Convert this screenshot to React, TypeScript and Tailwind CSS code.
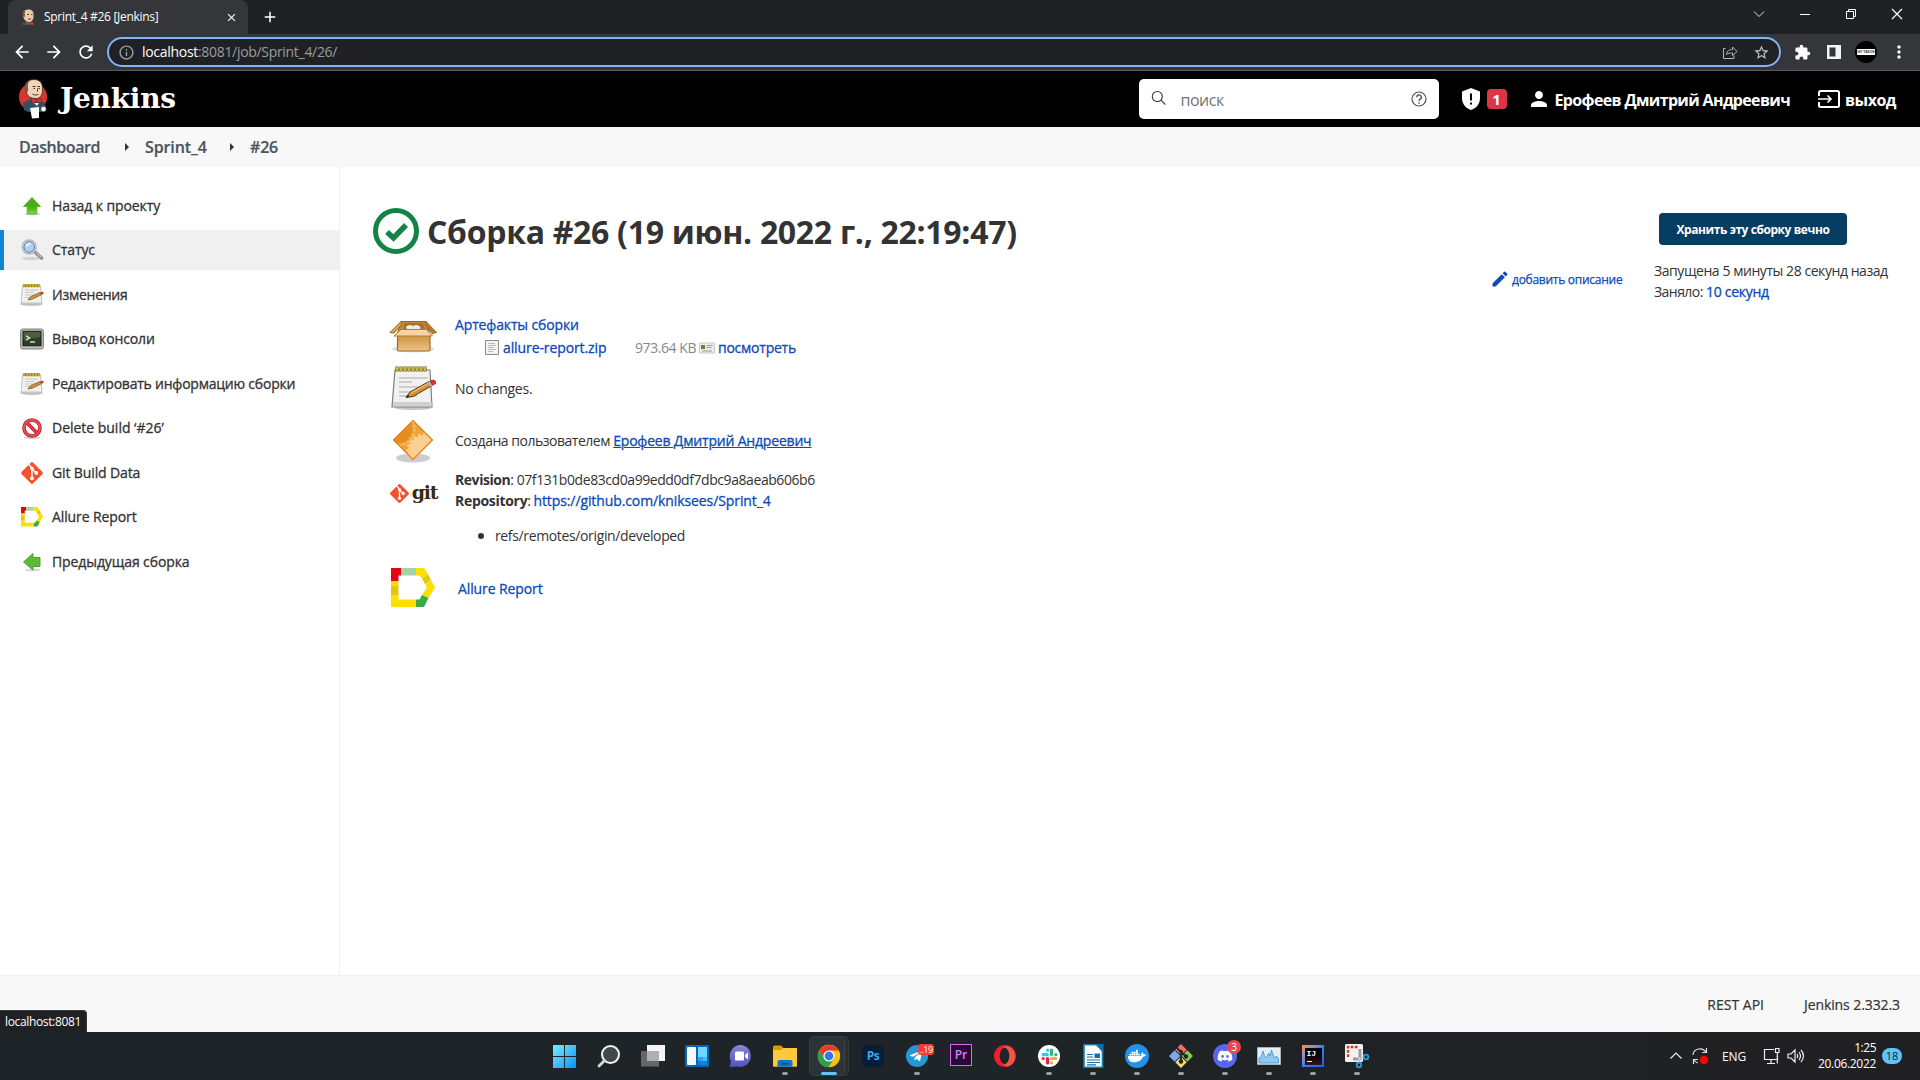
import React, { type ReactNode } from "react";
import {
  MdArrowBack, MdArrowForward, MdRefresh, MdInfoOutline, MdClose, MdAdd, MdStarBorder,
  MdExtension, MdMoreVert, MdPerson, MdEdit,
} from "react-icons/md";
import { FaDocker, FaDiscord, FaTelegramPlane } from "react-icons/fa";

/* ---------- Jenkins artwork ---------- */

function Butler({ className, disc = true }: { className?: string; disc?: boolean }) {
  return (
    <svg viewBox="0 0 28 40" className={className}>
      {disc && <ellipse cx="14" cy="18" rx="14" ry="14" fill="#d33833" />}
      <path d="M4 24 L11 20 L20 21 L26 24 L27 30 L22 33 H9 L5 31 Z" fill="#335061" />
      <path d="M7 12 C5 3 10 .5 15.500 .5 C21.500 .8 24 5 23.500 11 C23.500 16.500 20.500 19.500 17 19.500 C11.500 19.500 8 17 7 12Z" fill="#f0d6b7" stroke="#3b2a22" strokeWidth=".8" />
      <path d="M6.500 12 C4.500 7 6.500 2.500 11 1.200 C8.500 4 8.500 7 9.200 9.500 L8.500 13.500Z" fill="#6b5a55" />
      <path d="M13.500 7.500h3M18.500 7.500h2.500M14.500 9.500h1.500M19.500 9.500h1.500M18.500 9.500v3M13.500 15c2 1.400 4.500 1.400 6 .2" stroke="#4a3329" strokeWidth="1" fill="none" />
      <path d="M12 19 L17 21.500 L22 19 L22.500 24 L17 22.500 L13 24.500Z" fill="#d33833" stroke="#7a1512" strokeWidth=".5" />
      <path d="M15 24l3 3 2-3z" fill="#dfe8ee" />
      <path d="M11 29 L20 28 L20 39 L13 39.500Z" fill="#fff" />
      <circle cx="24.500" cy="30" r="2.600" fill="#fff" stroke="#555" strokeWidth=".6" />
    </svg>
  );
}

function ButlerFavicon() {
  return (
    <svg viewBox="0 0 14 16" className="h-4 w-[14px]">
      <path d="M.5 16 Q.5 13 4 12.500 H10 Q13.500 13 13.500 16Z" fill="#335061" />
      <path d="M2 6 C1.500 1.500 4.500 .5 7.500 .5 C11.500 .5 13 3 12.500 7 C12.500 11 10.500 13 8 13 C4.500 13 2.500 10 2 6Z" fill="#e8cda9" />
      <path d="M2 7 C1 3 2.500 1 5 .8 C3.500 2.500 3.500 4 4 6 L3.500 8.500Z" fill="#6b5a55" />
      <path d="M6 5.500h2M10 5.500h1.500M7 10h3" stroke="#4a3329" strokeWidth=".9" />
      <path d="M5 13 L8.500 14 L12 13 V16 L8.500 15 L5.500 16Z" fill="#d33833" />
    </svg>
  );
}

function ArrowGreen({ left }: { left?: boolean }) {
  return (
    <svg viewBox="0 0 24 24" className="size-6">
      <defs>
        <linearGradient id="greenArrow" x1="0" y1="0" x2="0" y2="1">
          <stop offset="0" stopColor="#5ca62c" />
          <stop offset=".55" stopColor="#45ac12" />
          <stop offset="1" stopColor="#7be03a" />
        </linearGradient>
      </defs>
      <ellipse cx="12.500" cy="20" rx="8" ry="1.500" fill="#000" opacity=".15" />
      {left
        ? <path d="M3.500 12 L13 3.500 V7.500 H20 V16.500 H13 V20 Z" fill="#5dbb35" stroke="#4b9a26" strokeWidth=".9" />
        : <path d="M12 3.500 L20.500 12.500 H16.800 V20 H7.200 V12.500 H3.500 Z" fill="url(#greenArrow)" stroke="#5aa92c" strokeWidth=".9" />}
    </svg>
  );
}

function Magnifier() {
  return (
    <svg viewBox="0 0 24 24" className="size-6">
      <ellipse cx="11" cy="20.500" rx="9" ry="1.800" fill="#000" opacity=".12" />
      <path d="M15.500 14.500 L21.500 20" stroke="#8c8c8c" strokeWidth="3.600" strokeLinecap="round" />
      <path d="M16.500 15 L21 19" stroke="#bdbdbd" strokeWidth="1.400" strokeLinecap="round" />
      <circle cx="9.200" cy="9" r="7" fill="#e8e8e8" stroke="#b5b5b5" strokeWidth="1.300" />
      <circle cx="9.200" cy="9" r="5.300" fill="#b4d0f0" stroke="#4a79b8" strokeWidth="1" />
      <path d="M5.500 8.500 a4 4 0 0 1 6 -3.200 a7 5 0 0 1 -6 3.200z" fill="#e6f0fb" />
    </svg>
  );
}

function Notepad() {
  return (
    <svg viewBox="0 0 48 48" className="size-12">
      <ellipse cx="24" cy="44" rx="18" ry="2" fill="#000" opacity=".22" />
      <path d="M6 6 H41 L43 43 H3 Z" fill="#f1f1ef" stroke="#7d7f7a" strokeWidth="1.200" />
      <path d="M4.500 38 H42.500 L43 42 H4Z" fill="#cfcfcd" />
      <path d="M10 14h29M10 18h13M10 23h24M10 28h22M10 32h18" stroke="#a9a9a9" strokeWidth="1" />
      <path d="M8 2.500v5M12 2.500v5M16 2.500v5M20 2.500v5M24 2.500v5M28 2.500v5M32 2.500v5M36 2.500v5" stroke="#6b5a08" strokeWidth="3.200" />
      <path d="M8 3v4M12 3v4M16 3v4M20 3v4M24 3v4M28 3v4M32 3v4M36 3v4" stroke="#e3c93a" strokeWidth="1.700" />
      <path d="M17 33.500 L21 28 L40 17.500 L43 21.500 L24 32.500 Z" fill="#d3913c" stroke="#573a10" strokeWidth="1" />
      <path d="M22 29 L40 19" stroke="#f0c07c" strokeWidth="1.200" />
      <path d="M38.500 18.300 L41 17 L43.500 21.200 L41 22.700Z" fill="#b5b5b5" />
      <path d="M41 17 Q45 15 46.500 17.500 T43.500 21.300Z" fill="#e03030" stroke="#8b1b1b" strokeWidth=".6" />
      <path d="M17 33.500 L19 30.500 L20.500 32.800Z" fill="#222" />
    </svg>
  );
}

function NotepadSmall() {
  return (
    <svg viewBox="0 0 24 24" className="size-6">
      <ellipse cx="12" cy="22" rx="9" ry="1.200" fill="#000" opacity=".2" />
      <path d="M2.500 2.500 H20.500 L22 21.500 H1 Z" fill="#f1f1ef" stroke="#b9bab6" strokeWidth=".9" />
      <path d="M1.200 19.500 H21.800 L22 21.500 H1Z" fill="#c4c4c1" />
      <path d="M5 7h13M5 9.500h9M5 12h10M5 14.500h7" stroke="#c4c4c2" strokeWidth=".9" />
      <path d="M3 1h17v3.300H3z" fill="#c3a93a" />
      <path d="M5.500 1.500v2.500M8.500 1.500v2.500M11.500 1.500v2.500M14.500 1.500v2.500M17.500 1.500v2.500" stroke="#8d7a22" strokeWidth=".8" />
      <path d="M8 17 L10.500 13.700 L20 9.500 L21.500 11.700 L12 16.300 Z" fill="#d3913c" stroke="#7b5a28" strokeWidth=".8" />
      <path d="M20 9.500 Q22.500 8.200 23.500 9.600 T21.500 11.700Z" fill="#e03030" />
    </svg>
  );
}

function Terminal() {
  return (
    <svg viewBox="0 0 24 24" className="size-6">
      <rect x=".6" y="2" width="22.800" height="20" rx="2.200" fill="#bcbeb9" stroke="#7f817d" />
      <rect x="3" y="4.300" width="18" height="14.400" fill="#2c3f24" stroke="#15190f" />
      <path d="M3.500 4.800 H20.500 V10 L3.500 13Z" fill="#55694a" opacity=".75" />
      <path d="M6 8.800 L9.500 11 L6 13.200" fill="none" stroke="#eef3ea" strokeWidth="1.300" />
      <path d="M10 15h5" stroke="#eef3ea" strokeWidth="1.300" />
      <path d="M16 20.400h2" stroke="#75d025" strokeWidth="1" />
    </svg>
  );
}

function Forbidden() {
  return (
    <svg viewBox="0 0 24 24" className="size-6">
      <ellipse cx="12" cy="21.600" rx="8.500" ry="1.300" fill="#000" opacity=".18" />
      <circle cx="12" cy="12" r="8" fill="#fff" stroke="#c01a20" strokeWidth="3.600" />
      <path d="M6.500 6.500 L17.500 17.500" stroke="#c01a20" strokeWidth="3.600" />
      <circle cx="12" cy="12" r="8" fill="none" stroke="#e0555a" strokeWidth="2" />
      <path d="M6.500 6.500 L17.500 17.500" stroke="#dd3f44" strokeWidth="2" />
    </svg>
  );
}

function GitMark({ className }: { className?: string }) {
  return (
    <svg viewBox="0 0 24 24" className={className}>
      <rect x="3.900" y="3.900" width="16.200" height="16.200" rx="1.600" transform="rotate(45 12 12)" fill="#f4512c" />
      <path d="M8.800 3.500 L12 7 V17.500 M12 8 L16.300 12" stroke="#fff" strokeWidth="1.500" fill="none" />
      <circle cx="12" cy="7.500" r="1.800" fill="#fff" />
      <circle cx="12" cy="17.300" r="1.900" fill="#fff" />
      <circle cx="16.300" cy="12" r="1.900" fill="#fff" />
    </svg>
  );
}

function Allure({ className }: { className?: string }) {
  return (
    <svg viewBox="0 0 44 40" className={className}>
      <path d="M0 0 H10 V7.500 H7.500 V13 H0Z" fill="#e30613" />
      <path d="M10 0 H25 V7.500 H10Z" fill="#a6d1a4" />
      <path d="M25 0 H33 L37.500 7 L31 10.500 L28.500 7.500 H25Z" fill="#ffde00" />
      <path d="M37.300 6.700 L31 10.500 L34 16 L40 12Z" fill="#e0c80f" />
      <path d="M34 16 L40 12 L44 19.500 L37.500 30 L31 27 L36 19.500Z" fill="#ffde00" />
      <path d="M37.500 30 L31 27 L28.500 31.500 H25 V39 H33Z" fill="#3aaa42" />
      <path d="M0 31.500 H25 V39 H0Z" fill="#ffde00" />
      <path d="M0 13 H7.500 V18 H0Z M0 27 H7.500 V32 H0Z" fill="#ffde00" />
      <path d="M0 18 H7.500 V27 H0Z" fill="#e0c80f" />
    </svg>
  );
}

function Box() {
  return (
    <svg viewBox="0 0 48 48" className="size-12">
      <defs>
        <linearGradient id="boxFront" x1="0" y1="0" x2="0" y2="1">
          <stop offset="0" stopColor="#c98f3a" />
          <stop offset="1" stopColor="#edc486" />
        </linearGradient>
      </defs>
      <ellipse cx="24" cy="37" rx="21" ry="3.500" fill="#000" opacity=".13" />
      <path d="M12 9.500 H37 L41 23 H8Z" fill="#c28a3c" stroke="#9a6419" strokeWidth="1" />
      <path d="M15.500 11 H34 L36 18 H14Z" fill="#a5732f" />
      <path d="M17 15 Q20 11.500 24 14 Q28 11.500 31.500 15 L31 17.500 H18Z" fill="#ececec" />
      <path d="M12 9.500 L1 20.500 L5 21 L13 12Z" fill="#dfa658" stroke="#9a6419" strokeWidth="1" />
      <path d="M37 9.500 L47.500 20.500 L43 21.500 L36 12Z" fill="#b87c2a" stroke="#9a6419" strokeWidth="1" />
      <rect x="8.500" y="22" width="32.500" height="17" rx="1.500" fill="url(#boxFront)" stroke="#a56a1c" strokeWidth="1.200" />
      <path d="M12 17.500 H37.500 L43.500 24 H5Z" fill="#f5d5a4" stroke="#b87c2a" strokeWidth="1" />
    </svg>
  );
}

function UserCause() {
  return (
    <svg viewBox="0 0 48 48" className="size-12">
      <defs>
        <linearGradient id="causeFill" x1="0" y1="0" x2="1" y2="1">
          <stop offset="0" stopColor="#ef9a2c" />
          <stop offset="1" stopColor="#f4a83f" />
        </linearGradient>
        <clipPath id="causeClip"><path d="M24 4 L44 24 L24 44 L4 24Z" /></clipPath>
      </defs>
      <ellipse cx="24" cy="42" rx="17" ry="4.500" fill="#000" opacity=".2" />
      <path d="M24 4 L44 24 L24 44 L4 24Z" fill="url(#causeFill)" />
      <g clipPath="url(#causeClip)">
        <circle cx="9" cy="13" r="16.500" fill="none" stroke="#f9c377" strokeWidth="2" strokeDasharray="2.500 2" />
        <circle cx="9" cy="13" r="14" fill="#e28f1f" />
        <circle cx="36" cy="36" r="17" fill="#fbd092" />
        <circle cx="36" cy="36" r="17.500" fill="none" stroke="#fbd092" strokeWidth="3" strokeDasharray="2.500 2.500" />
      </g>
      <path d="M24 4.600 L43.400 24 L24 43.400 L4.600 24Z" fill="none" stroke="#ee7f1c" strokeWidth="1.200" />
    </svg>
  );
}

/* ---------- browser chrome ---------- */

function TabStrip() {
  return (
    <div className="flex h-[34px] bg-[#202124] pl-2 text-white">
      <div className="flex h-full w-60 items-center rounded-t-lg bg-[#35363a] pl-[13px] pr-2.5">
        <ButlerFavicon />
        <span className="mb-px ml-[9px] grow whitespace-pre text-[12px] tracking-[-0.3px]">Sprint_4 #26 [Jenkins]</span>
        <MdClose className="size-[13px]" />
      </div>
      <MdAdd className="ml-[13px] mt-2 size-[18px]" />
      <div className="ml-auto flex h-[28px] items-center">
        <svg viewBox="0 0 12 12" className="mr-[34px] size-3 fill-none stroke-[#e0e0e0]"><path d="M1 3.500 L6 8.500 L11 3.500" /></svg>
        <svg viewBox="0 0 12 12" className="mr-[34px] size-3 fill-none stroke-white"><path d="M1 6.500H11" /></svg>
        <svg viewBox="0 0 12 12" className="mr-[34px] size-3 fill-none stroke-white"><path d="M1.500 3.500h7v7h-7z M3.500 3V1.500h7v7H9" /></svg>
        <svg viewBox="0 0 12 12" className="mr-[17px] size-3 fill-none stroke-white"><path d="M1 1 L11 11 M11 1 L1 11" strokeWidth="1.200" /></svg>
      </div>
    </div>
  );
}

function Toolbar() {
  return (
    <div className="flex h-[37px] items-center border-b border-[#5b5c60] bg-[#35363a] pl-3 text-white">
      <MdArrowBack className="size-5" />
      <MdArrowForward className="ml-3 size-5" />
      <MdRefresh className="ml-3 size-5" />
      <div className="ml-[11px] flex h-[30px] w-[1674px] items-center rounded-full border-2 border-[#84b2f6] bg-[#202124] px-[9px]">
        <MdInfoOutline className="size-[17px] text-[#9aa0a6]" />
        <span className="mb-px ml-[7px] whitespace-pre text-[14px] tracking-[-0.3px]">localhost</span>
        <span className="mb-px grow whitespace-pre text-[14px] tracking-[-0.31px] text-[#9a9da1]">:8081/job/Sprint_4/26/</span>
        <svg viewBox="0 0 16 16" className="size-4 fill-none stroke-[#b4b6b9]">
          <path d="M3.500 4.500H1.500v10h10.500v-3" />
          <path d="M4.500 10.500c.5-4 3-5 6-5V3l4.500 4.500-4.500 4V9c-3 0-4.500.2-6 1.500z" />
        </svg>
        <MdStarBorder className="ml-[15px] size-[17px] text-[#c2c4c7]" />
      </div>
      <MdExtension className="ml-[13px] size-[17px]" />
      <svg viewBox="0 0 14 14" className="ml-4 size-3.5"><path d="M0 0h14v14H0z" fill="#f1f3f4" /><path d="M2.500 2.500h6v9h-6z" fill="#35363a" /></svg>
      <div className="ml-3.5 flex size-[22px] items-center justify-center rounded-full bg-black">
        <span className="flex h-1.5 w-[18px] items-center justify-center whitespace-nowrap bg-white text-[3.500px] font-bold leading-none text-[#333]">НУ ТАКОЕ</span>
      </div>
      <MdMoreVert className="ml-3 size-5" />
    </div>
  );
}

/* ---------- Jenkins page ---------- */

function Header() {
  return (
    <header className="flex h-14 items-center bg-black text-[16px] font-bold text-white">
      <Butler className="ml-[19px] h-10 w-7" />
      <span className="mb-px ml-[13px] font-['DejaVu_Serif',serif] text-[28px] leading-8 tracking-[-0.25px]">Jenkins</span>
      <div className="ml-auto flex h-10 w-[300px] items-center rounded-[5px] bg-white px-3 font-normal">
        <svg viewBox="0 0 16 16" className="mt-[-2px] size-4 fill-none stroke-[#333a40]" strokeWidth="1.100"><circle cx="6.300" cy="6.500" r="5" /><path d="M10 10.200 L14.300 14.500" /></svg>
        <span className="ml-[14px] mt-px grow text-[16px] tracking-[-0.5px] text-[#757575]">поиск</span>
        <svg viewBox="0 0 16 16" className="size-4 fill-none stroke-[#4d545d]" strokeWidth="1.200"><circle cx="8" cy="8" r="7" /><path d="M5.700 6.300a2.300 2.300 0 1 1 3.300 2c-.8.400-1 .8-1 1.700M8 11.300v1.400" strokeWidth="1.400" /></svg>
      </div>
      <svg viewBox="0 0 18 22" className="ml-[23px] h-[22px] w-[18px]"><path d="M9 0 L18 3.500 V10 C18 16 14 20.500 9 22 C4 20.500 0 16 0 10 V3.500Z" fill="#fff" /><path d="M9 5.500v7M9 14.500v2" stroke="#000" strokeWidth="2" /></svg>
      <span className="ml-[7px] flex h-5 w-5 items-center justify-center rounded-[4px] bg-[#dc3545] text-[15px]">1</span>
      <MdPerson className="ml-5 size-6" />
      <span className="ml-1 whitespace-pre pt-px tracking-[-0.66px]">Ерофеев Дмитрий Андреевич</span>
      <svg viewBox="0 0 22 18" className="ml-7 h-[18px] w-[22px] fill-none stroke-white" strokeWidth="2"><path d="M1 6V2.500Q1 1 2.500 1H19.500Q21 1 21 2.500V15.500Q21 17 19.500 17H2.500Q1 17 1 15.500V12" /><path d="M0 9h12M9.500 5.500L13 9l-3.500 3.500" strokeWidth="1.600" /></svg>
      <span className="ml-[5px] mr-6 pt-px tracking-[-0.49px]">выход</span>
    </header>
  );
}

function Caret() {
  return <span className="mb-px size-0 border-y-4 border-l-4 border-y-transparent border-l-[#333]" />;
}

function Breadcrumbs() {
  return (
    <nav className="flex h-10 items-center bg-[#f8f8f8] pl-[19px] text-[16px] font-semibold text-[#4d545d] [-webkit-text-stroke:0.2px]">
      <span className="w-[106px] tracking-[-0.42px]">Dashboard</span>
      <Caret />
      <span className="ml-4 w-[85px] tracking-[-0.1px]">Sprint_4</span>
      <Caret />
      <span className="ml-4 tracking-[-0.2px]">#26</span>
    </nav>
  );
}

function Task({ icon, children, active }: { icon: ReactNode; children: ReactNode; active?: boolean }) {
  return (
    <div className={active
      ? "flex h-10 items-center border-l-4 border-[#0b85d4] bg-[#f0f0f0] pl-4"
      : "flex h-10 items-center pl-5"}>
      <span className="mr-2 flex size-6 items-center justify-center">{icon}</span>
      <span className="mb-px whitespace-pre text-[14px] font-medium text-[#333] [-webkit-text-stroke:0.3px]">{children}</span>
    </div>
  );
}

function Sidebar() {
  return (
    <aside className="flex w-[340px] shrink-0 flex-col gap-[4.5px] border-r border-[#f0f0f0] pt-[18.500px]">
      <Task icon={<ArrowGreen />}><span className="tracking-[-0.1px]">Назад к проекту</span></Task>
      <Task icon={<Magnifier />} active><span className="tracking-[-0.1px]">Статус</span></Task>
      <Task icon={<NotepadSmall />}><span className="tracking-[-0.25px]">Изменения</span></Task>
      <Task icon={<Terminal />}><span className="tracking-[-0.14px]">Вывод консоли</span></Task>
      <Task icon={<NotepadSmall />}><span className="tracking-[-0.22px]">Редактировать информацию сборки</span></Task>
      <Task icon={<Forbidden />}><span className="tracking-[-0.02px]">Delete build ‘#26’</span></Task>
      <Task icon={<GitMark className="size-6" />}><span className="tracking-[-0.12px]">Git Build Data</span></Task>
      <Task icon={<Allure className="h-[20px] w-[22px]" />}><span className="tracking-[-0.1px]">Allure Report</span></Task>
      <Task icon={<ArrowGreen left />}><span className="tracking-[-0.1px]">Предыдущая сборка</span></Task>
    </aside>
  );
}

function Row({ icon, children, className = "h-12 items-center" }: { icon: ReactNode; children: ReactNode; className?: string }) {
  return (
    <div className={"flex " + className}>
      <span className="mr-[18px] flex size-12 shrink-0 items-center justify-center">{icon}</span>
      {children}
    </div>
  );
}

function BuildInfo() {
  return (
    <div className="grow whitespace-pre pl-[33px] pt-[41px] text-[14px] text-[#333]">
      <h1 className="flex h-[46px] items-center text-[32px] font-bold tracking-[-0.3px]">
        <svg viewBox="0 0 46 46" className="mr-2 size-[46px] fill-none stroke-[#138347]"><circle cx="23" cy="23" r="20.500" strokeWidth="5" /><path d="M14 24 L20.500 30 L33 17" strokeWidth="5.500" /></svg>
        <span className="mt-0.5">Сборка #26 (19 июн. 2022 г., 22:19:47)</span>
      </h1>
      <div className="mt-[58px] flex flex-col gap-1 pl-4">
        <Row icon={<Box />}>
          <div className="text-[#0b4ab8]">
            <div className="h-6 font-medium leading-6 tracking-[-0.14px] [-webkit-text-stroke:0.3px]">Артефакты сборки</div>
            <div className="mt-[-1px] flex h-6 items-center pl-[30px]">
              <svg viewBox="0 0 14 15" className="mr-1 h-[15px] w-3.5 fill-[#f3f3f1] stroke-[#8a8c88]"><path d="M.5 .5h13v14H.5z" /><path d="M3 3.500h7M3 5.500h8M3 7.500h6M3 9.500h8M3 11.500h5" stroke="#bbb" /></svg>
              <span className="w-[132px] font-medium tracking-[-0.1px] [-webkit-text-stroke:0.3px]">allure-report.zip</span>
              <span className="w-16 tracking-[-0.44px] text-[#888]">973.64 KB</span>
              <svg viewBox="0 0 16 12" className="mr-[3px] h-3 w-4"><path d="M.5 1h15v10H.500z" fill="#eeeeec" stroke="#c8c8c5" /><path d="M2 3h4v4H2z" fill="#7c7434" /><path d="M7.500 3.500h6M7.500 5.500h5M3 9h10" stroke="#999" /></svg>
              <span className="font-medium tracking-[-0.24px] [-webkit-text-stroke:0.3px]">посмотреть</span>
            </div>
          </div>
        </Row>
        <Row icon={<Notepad />}><span className="mt-px tracking-[-0.25px]">No changes.</span></Row>
        <Row icon={<UserCause />}>
          <span className="mt-px tracking-[-0.48px]">Создана пользователем </span>
          <span className="mt-px font-medium tracking-[-0.19px] text-[#0b4ab8] underline [-webkit-text-stroke:0.3px]">Ерофеев Дмитрий Андреевич</span>
        </Row>
        <Row
          className="h-[92px]"
          icon={
            <span className="flex items-center">
              <GitMark className="mt-0.5 size-[21px]" />
              <span className="mb-px ml-0.5 font-['DejaVu_Serif',serif] text-[19px] font-bold leading-5 tracking-[-1.2px] text-[#3a2c08]">git</span>
            </span>
          }
        >
          <div className="pt-px leading-[21px]">
            <div><b className="tracking-[-0.45px]">Revision</b><span className="tracking-[-0.43px]">: 07f131b0de83cd0a99edd0df7dbc9a8aeab606b6</span></div>
            <div><b className="tracking-[-0.3px]">Repository</b><span className="tracking-[-0.6px]">: </span><span className="font-medium tracking-[-0.1px] text-[#0b4ab8] [-webkit-text-stroke:0.3px]">https://github.com/kniksees/Sprint_4</span></div>
            <div className="mt-3.5 flex items-center pl-[23px]"><span className="mr-[11px] size-[6px] rounded-full bg-[#333]" /><span className="tracking-[-0.36px]">refs/remotes/origin/developed</span></div>
          </div>
        </Row>
        <Row icon={<Allure className="h-10 w-11" />}><span className="ml-[3px] mt-px font-medium tracking-[-0.1px] text-[#0b4ab8] [-webkit-text-stroke:0.3px]">Allure Report</span></Row>
      </div>
    </div>
  );
}

function BuildAside() {
  return (
    <div className="flex items-start whitespace-pre pr-8 pt-[46px] text-[14px] text-[#333]">
      <div className="mt-[54px] flex h-6 items-center text-[12px] font-medium text-[#0b4ab8] [-webkit-text-stroke:0.25px]">
        <MdEdit className="mr-0.5 size-5" />
        <span className="mt-px w-[143px] tracking-[-0.27px]">добавить описание</span>
      </div>
      <div className="w-[233px]">
        <button className="ml-1 h-8 w-[188px] rounded-[4px] bg-[#063d63] pt-px text-[12px] font-bold tracking-[-0.43px] text-white">Хранить эту сборку вечно</button>
        <div className="ml-[-1px] mt-[15px] leading-[21px] tracking-[-0.44px]">Запущена 5 минуты 28 секунд назад</div>
        <div className="ml-[-1px] leading-[21px]"><span className="tracking-[-0.55px]">Заняло: </span><span className="font-medium tracking-[-0.28px] text-[#0b4ab8] [-webkit-text-stroke:0.3px]">10 секунд</span></div>
      </div>
    </div>
  );
}

/* ---------- taskbar ---------- */

function Windows() {
  return (
    <svg viewBox="0 0 24 24" className="size-6">
      <defs><linearGradient id="win" x1="0" y1="0" x2="1" y2="1"><stop offset="0" stopColor="#7ceaff" /><stop offset="1" stopColor="#0b93f6" /></linearGradient></defs>
      <path d="M0 1h11v11H0zM12 1h11v11H12zM0 13h11v11H0zM12 13h11v11H12z" fill="url(#win)" />
    </svg>
  );
}

function SearchIcon() {
  return (
    <svg viewBox="0 0 24 24" className="size-6">
      <circle cx="13.500" cy="10.500" r="8.500" fill="#41484c" stroke="#f2f2f2" strokeWidth="2" />
      <path d="M7.500 16.500 L2 22" stroke="#d8d8d8" strokeWidth="2.800" strokeLinecap="round" />
    </svg>
  );
}

function TaskView() {
  return (
    <svg viewBox="0 0 24 24" className="size-6">
      <path d="M6 1h18v16H6z" fill="#f4f4f4" /><path d="M0 7h18v15.500H0z" fill="#676767" /><path d="M6 7h12v10H6z" fill="#b0b0b0" />
    </svg>
  );
}

function Widgets() {
  return (
    <svg viewBox="0 0 24 24" className="size-6">
      <rect y="1" width="24" height="22" rx="1" fill="#0a67b8" /><rect x="2" y="3" width="9" height="18" rx="1" fill="#f4f8fc" />
      <path d="M13 3h9v10h-9z" fill="#71d6ff" /><path d="M13 13h4.500v4H13z" fill="#2ba3f0" /><path d="M17.500 13H22v4h-4.500z" fill="#48b8f8" /><path d="M13 17h9v4h-9z" fill="#0b84e0" />
    </svg>
  );
}

function Chat() {
  return (
    <svg viewBox="0 0 24 24" className="size-6">
      <defs><linearGradient id="chat" x1="0" y1="0" x2="0" y2="1"><stop offset="0" stopColor="#8b86cf" /><stop offset="1" stopColor="#5053c8" /></linearGradient></defs>
      <path d="M12.500 1a11 11 0 1 1-4.500 21.500L.800 23l1.200-6A11 11 0 0 1 12.500 1z" fill="url(#chat)" />
      <rect x="6" y="7.500" width="9" height="9" rx="1.200" fill="#fff" /><path d="M16 11l3-2.500v7L16 13z" fill="#fff" />
    </svg>
  );
}

function Explorer() {
  return (
    <svg viewBox="0 0 24 24" className="size-6">
      <path d="M0 3q0-1.500 1.500-1.500H8L10.500 4v4H0z" fill="#dc9a05" /><path d="M0 6h8l2-2h14v18q0 .8-1 .8H1q-1 0-1-1z" fill="#fcc93b" />
      <path d="M4.500 22.800V18q0-2 2-2h11q2 0 2 2v4.800z" fill="#1173c8" /><path d="M8.500 19h7v1.500h-7z" fill="#0a4f91" />
    </svg>
  );
}

function Chrome() {
  return (
    <svg viewBox="0 0 24 24" className="size-6">
      <circle cx="12" cy="12" r="11.200" fill="#fbc116" />
      <path d="M12 6.500 H21.700 L21 5.500 A11.200 11.200 0 0 0 2.300 6.400 L7.200 14.800Z" fill="#e33b2e" />
      <path d="M2.300 6.400 A11.200 11.200 0 0 0 11.500 23.200 L16.800 14.800 H7.200Z" fill="#2aa04b" />
      <circle cx="12" cy="12" r="5.600" fill="#fff" /><circle cx="12" cy="12" r="4.400" fill="#3277ec" />
    </svg>
  );
}

function LetterTile({ className, children }: { className: string; children: ReactNode }) {
  return <span className={"flex size-[22px] shrink-0 items-center justify-center leading-none " + className}>{children}</span>;
}

function Telegram() {
  return (
    <span className="relative flex size-[22px] shrink-0 items-center justify-center rounded-full bg-[#2497d4]">
      <FaTelegramPlane className="mr-0.5 size-[14px] text-white" />
      <span className="absolute left-3 top-[-1px] flex h-[11px] w-4 items-center justify-center rounded-[3px] bg-[#f23c34] text-[9px] leading-none tracking-[-0.3px] text-white">..19</span>
    </span>
  );
}

function Opera() {
  return (
    <svg viewBox="0 0 24 24" className="size-6">
      <circle cx="12" cy="12" r="11" fill="#f41c2c" />
      <path d="M15 2 a11 11 0 0 1 0 20.500 q-4 0-6.500-4 6 1 6-6.500t-6-6.500q2.500-4 6.500-3.500z" fill="#f4554b" />
      <ellipse cx="11.500" cy="12" rx="4.800" ry="8.300" fill="#1f2528" />
    </svg>
  );
}

function SlackMark() {
  return (
    <svg viewBox="0 0 16 16" className="size-[17px]" strokeWidth="3" strokeLinecap="round">
      <path d="M6.200 2v.100M2 6.200H6" stroke="#36c5f0" /><path d="M9.900 2V6M14 6.200h-.1" stroke="#2eb67d" />
      <path d="M10 9.900H14M9.900 14v-.1" stroke="#ecb22e" /><path d="M6.200 10V14M2 9.900h.1" stroke="#e01e5a" />
    </svg>
  );
}

function Writer() {
  return (
    <svg viewBox="0 0 24 24" className="size-6">
      <path d="M3 .8h12.500L21.500 7v16.200H3z" fill="#fff" stroke="#1a80b8" strokeWidth="1.600" /><path d="M15 0h7.500v8z" fill="#0e6fa8" />
      <path d="M6 10.500h6M6 13h6M6 16h13M6 18.500h13M6 20.800h9" stroke="#1b6f9f" strokeWidth="1.200" /><path d="M13.500 9.500h5.500v4.500h-5.500z" fill="#1b6f9f" />
    </svg>
  );
}

function GitBash() {
  return (
    <svg viewBox="0 0 24 24" className="size-6">
      <g transform="rotate(45 12 12)"><path d="M3.500 3.500h8v8h-8z" fill="#f0716b" /><path d="M12.500 3.500h8v8h-8z" fill="#8bc850" /><path d="M3.500 12.500h8v8h-8z" fill="#7fa8f0" /><path d="M12.500 12.500h8v8h-8z" fill="#f6dc78" /></g>
      <path d="M7 3 L12 8 V18 M12 8 L17 12.500" stroke="#22272a" strokeWidth="1.800" fill="none" /><circle cx="12" cy="17.500" r="2.200" fill="#22272a" /><circle cx="12" cy="7.500" r="1.800" fill="#22272a" /><circle cx="17" cy="12.500" r="2.200" fill="#22272a" />
    </svg>
  );
}

function Monitor() {
  return (
    <svg viewBox="0 0 24 24" className="size-6">
      <path d="M.5 3.500h23v17H.500z" fill="#e6edf3" stroke="#a8b3bc" /><path d="M2 19V14l2-1 2-6 1.500 5 2 2 2-5 1.500 3 1.500-6 2 6 1.500 2 1.500-2 2 3v4z" fill="#8ccbf3" stroke="#3c93d0" strokeWidth=".8" />
    </svg>
  );
}

function Idea() {
  return (
    <span className="flex size-[22px] shrink-0 items-center justify-center bg-gradient-to-br from-[#fc8a3a] via-[#3d7df2] to-[#1b5ff0]">
      <span className="flex size-[17px] flex-col bg-gradient-to-b from-black to-[#3a1420] pl-[2px] pt-[2px] font-['Liberation_Mono',monospace] text-[8px] font-bold leading-[8px] text-white">IJ<span className="mt-[3px] h-px w-[5px] bg-white" /></span>
    </span>
  );
}

function Snip() {
  return (
    <svg viewBox="0 0 26 26" className="h-[26px] w-[26px] shrink-0">
      <rect x="1" y="1" width="18" height="18" rx="1.500" fill="#f3f3f3" />
      <path d="M4 14V4H15" fill="none" stroke="#d93b12" strokeWidth="2.400" strokeDasharray="2.800 1.400" />
      <path d="M16 6v10H9" fill="none" stroke="#9c9c9c" strokeWidth="3" />
      <path d="M14 16 L20.500 15M15.500 14 L15 20" stroke="#c9c9c9" strokeWidth="1.600" />
      <circle cx="22" cy="14" r="2.300" fill="none" stroke="#1fa0e6" strokeWidth="1.800" /><circle cx="15" cy="22" r="2.300" fill="none" stroke="#1fa0e6" strokeWidth="1.800" />
    </svg>
  );
}

function TaskbarItem({ children, running, focused }: { children: ReactNode; running?: boolean; focused?: boolean }) {
  return (
    <div className={focused
      ? "relative mx-[-3px] mt-1 flex h-10 w-[38px] justify-center"
      : "relative mt-1 flex h-10 w-11 justify-center pt-2"}>
      <span className="flex size-6 items-center justify-center">{children}</span>
      {running && <span className="absolute bottom-px left-[19px] h-[3px] w-1.5 rounded-full bg-[#9b9d9e]" />}
    </div>
  );
}

function FocusedItem({ children }: { children: ReactNode }) {
  return (
    <div className="relative mt-1 h-10 w-11">
      <div className="ml-[2px] flex h-10 w-10 rounded-[5px] border border-[#363d40] bg-[#272d30]">
        <div className="flex h-full w-[35px] justify-center rounded-[5px] border-r border-[#3f4548] bg-[#2d3437] pl-[3px] pt-[7px]">{children}</div>
      </div>
      <span className="absolute bottom-px left-[14px] h-[3px] w-4 rounded-full bg-[#5fc4fb]" />
    </div>
  );
}

function Taskbar() {
  return (
    <div className="flex h-12 bg-gradient-to-r from-[#1e2528] via-[#1e2427] to-[#212022] text-[12px] text-white">
      <div className="ml-[543px] flex">
        <TaskbarItem><Windows /></TaskbarItem>
        <TaskbarItem><SearchIcon /></TaskbarItem>
        <TaskbarItem><TaskView /></TaskbarItem>
        <TaskbarItem><Widgets /></TaskbarItem>
        <TaskbarItem><Chat /></TaskbarItem>
        <TaskbarItem running><Explorer /></TaskbarItem>
        <FocusedItem><Chrome /></FocusedItem>
        <TaskbarItem><LetterTile className="rounded-[4px] bg-[#061e36] text-[12px] font-bold tracking-[-0.5px] text-[#39a5f5]">Ps</LetterTile></TaskbarItem>
        <TaskbarItem running><Telegram /></TaskbarItem>
        <TaskbarItem><LetterTile className="mb-[3px] border border-[#d868f0] bg-[#2b0638] text-[12px] font-semibold text-[#d582f2]">Pr</LetterTile></TaskbarItem>
        <TaskbarItem><Opera /></TaskbarItem>
        <TaskbarItem running><span className="flex size-[22px] shrink-0 items-center justify-center rounded-full bg-white"><SlackMark /></span></TaskbarItem>
        <TaskbarItem running><Writer /></TaskbarItem>
        <TaskbarItem running><span className="flex size-6 shrink-0 items-center justify-center rounded-full bg-[#2390ea]"><FaDocker className="size-[18px] text-white" /></span></TaskbarItem>
        <TaskbarItem running><GitBash /></TaskbarItem>
        <TaskbarItem running>
          <span className="relative flex size-6 shrink-0 items-center justify-center rounded-full bg-[#5865f2]">
            <FaDiscord className="size-4 text-white" />
            <span className="absolute -top-1 left-3.5 flex size-3.5 items-center justify-center rounded-full bg-[#e8484d] text-[10px] leading-none">3</span>
          </span>
        </TaskbarItem>
        <TaskbarItem running><Monitor /></TaskbarItem>
        <TaskbarItem running><Idea /></TaskbarItem>
        <TaskbarItem running><Snip /></TaskbarItem>
      </div>
      <div className="ml-auto flex items-center whitespace-pre">
        <svg viewBox="0 0 12 12" className="size-3 fill-none stroke-[#eee]" strokeWidth="1.200"><path d="M.5 8.500 L6 3 L11.500 8.500" /></svg>
        <svg viewBox="0 0 18 18" className="ml-[9px] size-[18px] fill-none stroke-[#ddd]" strokeWidth="1.200"><path d="M2 8a7 6.500 0 0 1 13-3M15.500 1v4.500H11M2.500 17v-4.500H7M3 13a7 6 0 0 0 4 3" /><circle cx="13" cy="13" r="4.200" fill="#f00" stroke="none" /></svg>
        <span className="ml-[13px] mt-0.5 tracking-[-0.14px]">ENG</span>
        <svg viewBox="0 0 18 18" className="ml-[17px] size-[18px] fill-none stroke-[#eee]" strokeWidth="1.200"><path d="M11 2.500H1.500v10h13V9M8 12.500V16M4 16.500h8M12.500 1.500h3.500v4h-3.500zM14.300 5.500v11" /></svg>
        <svg viewBox="0 0 18 18" className="ml-[6px] size-[18px] fill-none stroke-[#eee]" strokeWidth="1.200"><path d="M1 7h3l4-4v12l-4-4H1zM10 7q1.500 2 0 4M12 5q3 4 0 8M14 3q5 6 0 12" /></svg>
        <div className="ml-[13px] w-[58px] text-right leading-4">
          <div className="tracking-[-0.5px]">1:25</div>
          <div className="tracking-[-0.32px]">20.06.2022</div>
        </div>
        <span className="ml-1.5 mr-[18px] flex h-4 w-5 items-center justify-center rounded-full bg-[#5ec5fc] text-[11px] text-[#16202a]">18</span>
      </div>
    </div>
  );
}

export default function App() {
  return (
    <div className="flex h-[1080px] w-[1920px] flex-col overflow-hidden bg-white font-['Open_Sans',sans-serif]">
      <TabStrip />
      <Toolbar />
      <Header />
      <Breadcrumbs />
      <div className="flex h-[808px]">
        <Sidebar />
        <BuildInfo />
        <BuildAside />
      </div>
      <footer className="relative flex h-[57px] items-center justify-end whitespace-pre border-t border-[#f0f0f0] bg-[#f8f8f8] pr-5 pt-px text-[14px] text-[#333] [-webkit-text-stroke:0.2px]">
        <span className="mr-10">REST API</span>
        <span className="tracking-[-0.09px]">Jenkins 2.332.3</span>
        <span className="absolute bottom-0 left-0 flex h-[22px] w-[87px] items-center rounded-tr-[4px] border-r border-t border-[#3a3b3e] bg-[#202124] pl-[5px] text-[12px] tracking-[-0.35px] text-white [-webkit-text-stroke:0]">localhost:8081</span>
      </footer>
      <Taskbar />
    </div>
  );
}
